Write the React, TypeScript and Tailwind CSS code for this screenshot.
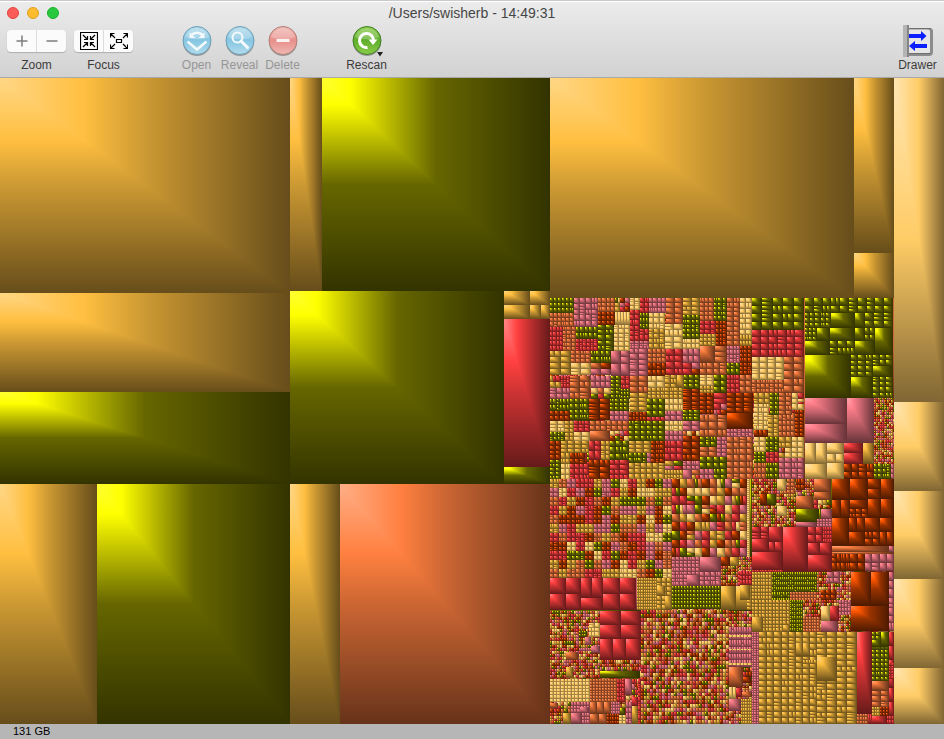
import React from "react";

type Tone = "g" | "o" | "r" | "c" | "p" | "y" | "b";
type Leaf = { x: number; y: number; w: number; h: number; tone: Tone };
type Layer = { x: number; y: number; unit: number; blocks: string };

/* Base colour of every file type. */
const TONES: Record<Tone, [number, number, number]> = {
  g: [204, 153, 51],
  o: [102, 102, 0],
  r: [204, 51, 51],
  c: [204, 102, 51],
  p: [204, 102, 112],
  y: [255, 204, 102],
  b: [153, 51, 0],
};
const TONE_KEYS = Object.keys(TONES) as Tone[];
const MIX: Tone[] = ["y", "g", "r", "c", "p", "b", "o", "r", "c", "b", "y", "o", "p", "g", "r", "b", "c"];

const rgb = (c: number[]) => `rgb(${c.map((v) => Math.round(v)).join(",")})`;

/* Light corner, full brightness, base colour, shadow. */
function stopsFor(tone: Tone) {
  const c = TONES[tone];
  const max = Math.max(...c);
  const value = max / 255;
  const sat = 1 - Math.min(...c) / max;
  const room = 1 - value;
  const knee = 0.5 - room / (room + sat);
  const top = c.map((v) => v / value);
  const lift = (room + sat) * 0.5 - room;
  const light = top.map((v) => 255 - (255 - v) * ((sat - lift) / sat));
  return [
    { at: 0, color: rgb(light) },
    { at: Math.max(knee, 0), color: rgb(top) },
    { at: 0.5, color: rgb(c) },
    { at: 1, color: rgb(c.map((v) => v / 2)) },
  ];
}

/*
 * Block lines: tone x0 y0 x1 y1 [cellWidth cellHeight].
 * Without a cell size the block is one file. "m" colours every cell on its
 * own, "M" colours folders of several cells.
 */
const LAYERS: Layer[] = [
  {
    x: 0,
    y: 0,
    unit: 1,
    blocks: `g 0 78 290 293;g 0 293 290 392;o 0 392 290 484;g 0 484 97 724;o 97 484 290 724
g 290 78 322 291;o 322 78 550 291;o 290 291 504 484
g 504 291 530 305;g 530 291 550 305;g 504 305 530 319;g 530 305 541 319;g 541 305 550 319
r 504 319 550 467;o 504 467 550 484;g 290 484 340 724;c 340 484 550 724
g 550 78 854 298;g 854 78 894 253;g 854 253 894 298
y 894 78 944 402;y 894 402 944 491;y 894 491 944 579;y 894 579 944 668;y 894 668 944 724
M 550 298 752 480 5 5;m 550 476 894 724 4 4;m 752 393 805 480 5 5`,
  },
  {
    x: 500,
    y: 280,
    unit: 3,
    blocks: `o 150 54 221 98 12 14;p 221 54 293 140 18 17;c 293 54 345 96 12 14;b 293 96 345 134 13 13
m 345 54 390 96 14 14;y 345 96 390 134 9 38;y 390 54 420 90 15 12;r 420 54 446 100 13 15
r 390 90 420 182 15 15;o 420 100 446 146 9 15;r 420 146 446 184 13 19;p 446 54 498 98 13 15
y 446 98 496 146 17 16;g 446 146 496 208 17 16;c 498 54 548 132 25 16;y 496 132 548 208 26 19
g 548 54 600 106 26 13;o 548 106 600 176 13 14;y 548 176 600 208 12 16;c 600 54 641 124 14 14
o 641 54 680 124 13 14;r 600 124 648 162 16 13;g 600 162 648 198 12 12;b 648 124 680 198 11 12
c 680 54 720 198 20 15;y 720 54 756 164 18 16;g 720 164 756 198 9 17
c 150 98 221 140 12 14;r 150 140 189 212 10 14;c 189 140 227 212 13 12;o 227 140 293 178 13 19
r 227 178 293 212 11 11;o 293 134 341 212 24 16;y 341 134 390 212 16 13;p 390 182 446 208 14 9
p 390 208 444 288 27 16;c 444 208 498 248 14 13;b 444 248 498 288 13 20;r 498 208 548 284 25 19
p 548 208 600 248 17 20;m 548 248 600 284 26 18;c 600 198 645 250;c 645 198 680 250 35 17
c 600 250 680 284 20 17;p 680 198 720 250 10 13;b 720 198 756 284 12 12;o 680 250 720 284 13 17
g 150 212 212 286 31 18;c 212 212 272 250 15 13;y 212 250 272 286 30 18;o 272 212 333 250 15 19
m 272 250 333 286 30 18;p 333 212 390 288 28 38;m 150 288 182 324 16 18;r 182 288 211 324 10 12
c 211 288 270 358 29 18;p 272 288 333 324 15 18;m 272 324 333 358 20 17;o 333 288 362 358 14 12
r 362 288 390 328 14 13;o 362 328 390 358 10 10;c 390 288 443 338 26 16;y 443 288 496 324 27 18
g 443 324 496 358 13 12;g 390 338 443 394 26 14;g 496 284 530 324 17 13;g 530 284 552 324;g 496 324 550 358 14 12
o 552 284 600 326 16 14;b 550 326 600 390 25 13;y 600 284 641 318 20 17;g 600 318 641 338 10 10
o 641 284 680 338 20 18;r 680 284 720 338 13 13;c 720 284 756 338 18 18;p 150 324 211 358 20 17
o 150 358 211 392 10 17;b 150 392 211 422 15 15;o 211 358 268 420 14 15;b 268 358 330 420 31 15
o 330 358 387 392 14 12;p 330 392 387 422 14 15;b 387 396 441 422 11 13;o 441 358 494 410 18 17
r 441 410 494 422 27 12;y 494 358 548 392 14 17;p 494 392 548 422 18 15;o 548 390 600 422 17 11
b 600 338 641 402 20 13;r 641 338 680 372 39 17;m 641 372 680 404 20 16;b 680 338 760 398 27 15
b 680 398 760 446;p 680 446 760 470 12 12;c 600 404 680 470 27 22
y 150 422 195 456 22 11;o 150 456 195 482 11 13;g 195 422 221 482 13 12;r 221 422 270 456 16 11
y 221 456 270 482 25 13;c 270 422 387 452 17 15;c 270 452 330 482;m 330 452 387 482 15 15
o 387 422 494 482 18 15;y 494 422 548 452 14 15;p 494 452 548 482 14 15;p 548 422 600 452 26 15
m 548 452 600 482 13 15;b 150 482 182 540 16 14;g 182 482 268 520 21 13;b 210 520 255 552 15 16
g 182 520 210 552 14 16;r 268 482 302 540 17 29;g 302 482 330 540 14 14;o 330 482 387 540 19 19
g 387 482 452 518 22 12;o 387 518 440 548 13 15;p 440 518 452 548 12 15;b 452 482 494 548 14 13
r 494 482 548 542 18 20;b 548 468 600 542 26 18;o 600 470 650 502 16 16;p 650 470 680 532 15 12
c 600 502 650 532 25 15;o 600 532 680 566 20 17;c 680 470 760 600 20 19
o 150 540 182 600 16 12;y 182 552 210 600 14 16;r 210 552 268 600 15 16;b 268 540 330 600 31 20
r 330 540 387 600 28 15;g 387 548 494 600 18 17;m 494 542 548 570 27 14;g 494 570 548 600 9 15
p 548 542 600 570 13 14;p 548 570 575 600;m 575 570 600 600 25 15;p 600 566 641 600 14 17;o 641 566 680 600 20 17`,
  },
  {
    x: 745,
    y: 280,
    unit: 3,
    blocks: `o 20 54 177 150 31 24;r 20 150 177 230 26 20;y 20 230 116 300 24 17;c 116 230 177 338 30 22;c 20 300 116 338 14 12
c 177 54 180 598;o 180 54 444 98 26 22;o 180 98 258 143 16 15;o 258 98 330 143;o 330 98 360 143;o 360 98 444 143 28 22
o 180 143 216 182 12 13;o 216 143 255 182;o 255 143 330 182;o 330 143 360 182;o 360 143 390 182 30 20;o 390 143 444 224
o 180 182 255 224;o 255 182 330 224 25 20;o 330 182 390 224
o 180 224 318 354;o 318 224 384 290 22 16;o 318 290 384 354;o 384 224 444 354 20 16;o 384 258 440 290
p 180 354 306 432;p 180 432 306 489;p 306 354 387 489;m 387 354 444 552 6 7
c 444 54 447 354;m 444 354 447 600 3 20
y 180 489 212 552;y 212 489 246 552;y 246 489 297 521;y 246 521 297 548 25 27;y 180 552 246 598;y 246 548 297 598
r 297 489 354 520;r 297 520 354 552;g 354 489 387 552;b 297 552 387 598 22 23;o 387 552 438 598 13 15;p 438 552 447 598 9 15
g 26 338 76 372 17 17;y 26 372 72 450 16 13;o 76 338 101 404 12 13;g 70 404 101 472 15 13;b 26 450 70 472 15 22
c 101 338 140 404 20 13;m 140 338 177 390 18 17;b 150 390 177 472 13 12;c 101 404 150 472 12 17
y 26 472 64 515 19 14;o 64 472 101 515 12 14;o 26 515 64 550 12 12;r 64 515 101 550 12 17;c 26 550 64 598 13 16
o 64 550 101 598 12 16;g 101 472 140 505 20 16;y 140 472 177 535 18 15;y 120 505 140 535 20 15;m 101 505 120 535 19 15;p 101 535 177 598 19 16`,
  },
  {
    x: 540,
    y: 475,
    unit: 3,
    blocks: `M 30 12 396 308 13 14;m 396 12 622 246 22 25;y 622 12 630 260 8 6;o 630 12 636 246
p 396 246 480 334 12 11;p 480 246 543 290;p 440 300 480 334 40 34;p 480 290 543 334 16 15;b 543 246 570 272;g 570 246 596 272
m 596 246 636 290 7 7;m 543 272 594 332 7 9;r 594 288 636 332 10 12
r 30 308 78 356;r 78 308 122 356;r 122 308 155 368;r 155 308 189 368;r 122 368 189 404;r 189 308 240 356;r 240 308 288 356
r 30 356 78 404;r 78 356 122 404;r 189 356 240 404;r 240 356 288 404;p 288 308 292 404
g 292 308 350 404 7 9;g 350 308 396 404 15 14;g 350 334 375 362;g 375 362 396 404;o 396 334 543 402 9 11
g 543 332 588 404;g 588 332 636 404;o 30 404 636 409`,
  },
  {
    x: 740,
    y: 470,
    unit: 3,
    blocks: `m 36 27 168 171 7 9;y 112 27 138 62;o 80 72 108 104;b 60 72 80 104;y 110 108 140 138;b 168 27 194 60 13 16;c 142 27 166 72 12 12
m 194 27 222 78 7 9;c 222 27 274 66;c 222 66 274 90;c 168 78 220 117;m 222 90 274 117 14 13;o 168 117 238 156
o 238 117 242 156;p 242 117 276 147;p 168 156 232 171;p 232 147 276 171 10 8;o 274 27 276 115
r 36 171 86 208 22 18;r 36 208 86 246;r 86 171 128 216;r 86 216 106 246;r 106 216 128 246;r 36 246 128 300;r 36 300 128 306 8 6
r 128 171 204 306;r 204 171 250 218 22 23;r 250 171 276 218 6 12;r 204 218 240 254;r 240 218 276 254;r 204 254 276 306
b 276 27 330 90;b 330 27 384 90;b 384 27 422 58;b 384 58 422 86;b 422 27 461 86;b 276 90 302 143;b 302 90 330 143
b 330 90 384 116;b 330 116 384 143 16 14;b 384 86 422 143;b 422 86 461 143;b 276 143 327 228;b 327 143 350 185
b 350 143 375 185;b 375 143 420 185;b 420 143 461 185;b 327 185 375 228;b 375 185 420 228 22 21;b 420 185 440 228;b 440 185 461 228
c 276 228 447 246;p 447 228 461 246;c 276 246 461 251;b 276 251 330 304 14 26;b 330 251 375 304 22 26;p 375 251 461 304 24 26
g 36 306 96 420 9 10;g 22 306 36 420 14 10;o 96 306 232 366 6 16;o 96 366 150 400 7 14;c 150 366 232 420 9 9
m 232 306 333 420 7 9;p 260 306 300 340 16 14;b 242 360 288 406 15 15;r 0 304 36 346 10 14;g 0 346 30 390
b 333 306 392 408;b 392 306 447 408;p 447 306 461 408 14 25`,
  },
  {
    x: 540,
    y: 600,
    unit: 3,
    blocks: `o 30 29 303 33;m 30 33 180 235 7 9;c 78 155 114 180;g 78 200 100 234;y 148 70 180 110 15 13;o 116 92 142 110 9 9;p 135 112 153 135;p 153 138 180 158
r 180 33 242 75;r 242 33 303 75;r 180 75 242 117;r 242 75 303 117;r 180 117 219 179;r 219 117 258 179;r 258 117 303 179
m 180 179 303 213 7 11;o 180 213 300 234;y 300 213 303 234
y 30 236 150 306 11 10;c 150 236 230 306 9 9;r 230 236 256 306 9 14;p 256 236 276 284;m 276 236 300 318 9 18;r 276 290 294 318
m 30 306 92 340 10 11;c 30 308 54 324;p 92 306 150 340 10 11;p 120 322 146 340;c 150 306 214 342 22 36;p 214 306 240 342 7 9;c 150 342 202 372 26 30
b 202 342 240 372 8 10;m 30 340 68 372 7 9;g 68 340 92 372;p 92 340 126 372;p 126 340 150 372 8 10;o 240 325 256 345;y 238 345 258 372 10 9
p 258 306 276 372 9 18;g 276 318 294 372;r 294 236 303 372 9 14;m 303 29 567 372 9 12
m 567 33 636 80 8 9;p 567 80 636 202 8 20;y 567 106 636 110 12 4;y 567 147 636 151 12 4;y 567 190 636 194 12 4
c 567 202 609 260;m 609 217 636 296 9 14;b 609 232 633 248;y 567 260 588 296 10 36;r 588 265 606 290;c 606 276 636 290
p 567 296 604 332;g 604 296 636 372 7 10;m 567 332 604 372 7 9`,
  },
  {
    x: 740,
    y: 600,
    unit: 3,
    blocks: `g 36 0 150 96 10 11;g 36 50 70 96;g 128 74 150 96;o 150 0 190 96 6 12;m 190 0 240 50 6 10;c 190 50 240 96 8 10
m 232 0 298 18 7 9;y 243 18 270 62;r 270 18 298 62;p 243 62 294 96;p 298 0 333 96 9 12;m 298 44 333 96 8 9
b 333 18 447 93;p 447 0 461 93 14 24;p 36 96 57 372 7 7
g 57 96 147 372 22 18;g 147 96 230 372 21 18;g 230 96 351 372 30 17;g 168 130 188 168;g 188 130 210 168;g 230 170 290 242;g 188 180 230 192 8 12
r 351 96 396 342;c 351 342 384 372 8 9;r 384 342 396 372 6 30
o 396 96 447 244 13 13;o 422 96 447 142;o 396 120 422 142;c 396 244 447 274;c 396 274 447 320 22 15;g 396 320 420 348 8 9
b 420 320 447 348 9 9;r 396 348 440 372;r 440 348 461 372 7 12;r 447 96 461 348 14 44;r 447 190 461 238 6 8`,
  },
];

function makeRandom(seed: number) {
  let s = seed;
  return () => {
    s = (s + 0x6d2b79f5) | 0;
    let t = Math.imul(s ^ (s >>> 15), 1 | s);
    t = (t + Math.imul(t ^ (t >>> 7), 61 | t)) ^ t;
    return ((t ^ (t >>> 14)) >>> 0) / 4294967296;
  };
}

function buildLeaves(): Leaf[] {
  const random = makeRandom(1449);
  const leaves: Leaf[] = [];
  const pick = () => MIX[Math.floor(random() * MIX.length)];

  const push = (x0: number, y0: number, x1: number, y1: number, tone: Tone) => {
    const x = Math.round(x0);
    const y = Math.round(y0);
    const w = Math.round(x1) - x;
    const h = Math.round(y1) - y;
    if (w > 0 && h > 0) leaves.push({ x, y, w, h, tone });
  };

  const grid = (x0: number, y0: number, x1: number, y1: number, cw: number, ch: number, tone: () => Tone) => {
    const rows = Math.max(1, Math.round((y1 - y0) / ch));
    const cols = Math.max(1, Math.round((x1 - x0) / cw));
    const dx = (x1 - x0) / cols;
    const dy = (y1 - y0) / rows;
    for (let r = 0; r < rows; r++) {
      for (let c = 0; c < cols; c++) {
        const ax = x0 + c * dx;
        const ay = y0 + r * dy;
        const roll = random();
        if (roll < 0.1 && dx >= 4) {
          push(ax, ay, ax + dx / 2, ay + dy, tone());
          push(ax + dx / 2, ay, ax + dx, ay + dy, tone());
        } else if (roll < 0.18 && dy >= 4) {
          push(ax, ay, ax + dx, ay + dy / 2, tone());
          push(ax, ay + dy / 2, ax + dx, ay + dy, tone());
        } else {
          push(ax, ay, ax + dx, ay + dy, tone());
        }
      }
    }
  };

  for (const layer of LAYERS) {
    for (const line of layer.blocks.split(/[;\n]/)) {
      const [kind, ...rest] = line.trim().split(" ");
      const n = rest.map(Number);
      const x0 = Math.round(layer.x + n[0] / layer.unit);
      const y0 = Math.round(layer.y + n[1] / layer.unit);
      const x1 = Math.round(layer.x + n[2] / layer.unit);
      const y1 = Math.round(layer.y + n[3] / layer.unit);
      const cw = n[4] / layer.unit;
      const ch = n[5] / layer.unit;
      if (kind === "M") {
        const cols = Math.round((x1 - x0) / 9);
        const rows = Math.round((y1 - y0) / 9);
        const dx = (x1 - x0) / cols;
        const dy = (y1 - y0) / rows;
        for (let r = 0; r < rows; r++) {
          for (let c = 0; c < cols; c++) {
            const tone = pick();
            grid(x0 + c * dx, y0 + r * dy, x0 + (c + 1) * dx, y0 + (r + 1) * dy, cw, ch, () => tone);
          }
        }
      } else if (kind === "m") {
        grid(x0, y0, x1, y1, cw, ch, pick);
      } else if (n.length > 4) {
        grid(x0, y0, x1, y1, cw, ch, () => kind as Tone);
      } else {
        push(x0, y0, x1, y1, kind as Tone);
      }
    }
  }
  return leaves;
}

const LEAVES = buildLeaves();

function Treemap() {
  return (
    <svg
      className="block min-h-0 w-full flex-1"
      viewBox="0 78 944 646"
      preserveAspectRatio="none"
      shapeRendering="crispEdges"
      role="img"
      aria-label="Disk usage"
    >
      <defs>
        {TONE_KEYS.map((tone) => (
          <React.Fragment key={tone}>
            <linearGradient id={`h-${tone}`} x1="0" y1="0" x2="1" y2="0">
              {stopsFor(tone).map((s, i) => (
                <stop key={i} offset={s.at} stopColor={s.color} />
              ))}
            </linearGradient>
            <linearGradient id={`v-${tone}`} x1="0" y1="0" x2="0" y2="1">
              {stopsFor(tone).map((s, i) => (
                <stop key={i} offset={s.at} stopColor={s.color} />
              ))}
            </linearGradient>
          </React.Fragment>
        ))}
      </defs>
      {LEAVES.map((l, i) => (
        <g key={i}>
          <rect x={l.x} y={l.y} width={l.w} height={l.h} fill={`url(#h-${l.tone})`} />
          <path d={`M${l.x} ${l.y}v${l.h}h${l.w}z`} fill={`url(#v-${l.tone})`} />
        </g>
      ))}
    </svg>
  );
}

function Orb({ from, to, edge, children }: { from: string; to: string; edge: string; children: React.ReactNode }) {
  const id = `orb-${edge.slice(1)}`;
  return (
    <svg width="32" height="32" viewBox="0 0 32 32" fill="none" aria-hidden="true">
      <defs>
        <linearGradient id={id} x1="0" y1="0" x2="0" y2="1">
          <stop offset="0" stopColor={from} />
          <stop offset="0.5" stopColor={to} />
          <stop offset="1" stopColor={from} />
        </linearGradient>
      </defs>
      <ellipse cx="16" cy="17.5" rx="14" ry="13.5" fill="#000" opacity="0.3" />
      <circle cx="16" cy="15.5" r="14" fill={`url(#${id})`} stroke={edge} />
      <path d="M4 12a12.500 12.500 0 0 1 24 0c-6 3-18 3-24 0z" fill="#fff" opacity="0.22" />
      {children}
    </svg>
  );
}

function Tool({ label, muted, children }: { label: string; muted?: boolean; children: React.ReactNode }) {
  return (
    <button type="button" disabled={muted} className="flex w-[43px] flex-col items-center">
      <span className="flex h-8 items-center">{children}</span>
      <span className={`text-xs leading-4 ${muted ? "text-[#969696]" : "text-[#3c3c3c]"}`}>{label}</span>
    </button>
  );
}

function Segments({ label, items }: { label: string; items: { name: string; icon: React.ReactNode }[] }) {
  return (
    <div role="group" aria-label={label} className="flex w-[59px] flex-col items-center">
      <div className="flex h-8 w-full items-center">
        <div className="flex h-[22px] w-full divide-x divide-[#dcdcdc] rounded bg-[#fbfbfb] shadow-[0_1px_1px_rgba(0,0,0,0.2)]">
          {items.map((item) => (
            <button key={item.name} type="button" aria-label={item.name} className="flex flex-1 items-center justify-center">
              {item.icon}
            </button>
          ))}
        </div>
      </div>
      <span className="text-xs leading-4 text-[#3c3c3c]">{label}</span>
    </div>
  );
}

const plusIcon = (
  <svg width="12" height="12" viewBox="0 0 12 12" stroke="#7d7d7d" strokeWidth="1.500">
    <path d="M6 .5v11M.5 6h11" />
  </svg>
);
const minusIcon = (
  <svg width="12" height="12" viewBox="0 0 12 12" stroke="#7d7d7d" strokeWidth="1.500">
    <path d="M.5 6h11" />
  </svg>
);
const focusInIcon = (
  <svg width="18" height="18" viewBox="0 0 18 18" fill="none" stroke="#000" strokeWidth="1.200">
    <path d="M.5 .5h17v17H.5z" />
    <path d="M3 3l4 4M7.500 4v3.500H4M15 3l-4 4M10.500 4v3.500H14M3 15l4-4M4 10.500h3.500V14M15 15l-4-4M14 10.500h-3.500V14" />
  </svg>
);
const focusOutIcon = (
  <svg width="18" height="18" viewBox="0 0 18 18" fill="none" stroke="#000" strokeWidth="1.200">
    <path d="M6.500 7.500h5v3h-5z" />
    <path d="M1 2l4 4M.5 5.500v-4h4M17 2l-4 4M17.500 5.500v-4h-4M1 16l4-4M.5 12.500v4h4M17 16l-4-4M17.500 12.500v4h-4" />
  </svg>
);

export default function App() {
  return (
    <div className="flex h-screen flex-col overflow-hidden bg-[#b6b6b6] font-['Liberation_Sans',Arial,sans-serif]">
      <header className="shrink-0 border-b border-[#a9a9a9] bg-linear-to-b from-[#ececec] to-[#d2d2d2]">
        <div className="h-px bg-[#c9c9c9]" />
        <div className="grid h-6 grid-cols-[1fr_auto_1fr] items-center border-t border-white pb-px">
          <div className="flex gap-2 pl-[7px]">
            <button type="button" aria-label="Close" className="size-3 rounded-full border border-[#e2463f] bg-[#fc5b57]" />
            <button type="button" aria-label="Minimize" className="size-3 rounded-full border border-[#dfa023] bg-[#fdbc2e]" />
            <button type="button" aria-label="Full screen" className="size-3 rounded-full border border-[#1daf2b] bg-[#28c93f]" />
          </div>
          <h1 className="text-sm leading-4 text-[#464646]">/Users/swisherb - 14:49:31</h1>
        </div>
        <div className="flex h-[52px] pr-[5px] pl-[7px]">
          <div className="flex gap-2">
            <Segments
              label="Zoom"
              items={[
                { name: "Zoom in", icon: plusIcon },
                { name: "Zoom out", icon: minusIcon },
              ]}
            />
            <Segments
              label="Focus"
              items={[
                { name: "Focus in", icon: focusInIcon },
                { name: "Focus out", icon: focusOutIcon },
              ]}
            />
          </div>
          <div className="ml-[42px] flex">
            <Tool label="Open" muted>
              <Orb from="#b3dcec" to="#86c6e2" edge="#6d9db5">
                <path d="M6.500 16.500l9.500 8 9.500-8" stroke="#f4f9fb" strokeWidth="2.500" />
                <path d="M10.500 10c3-3 8-3 11 0" stroke="#f4f9fb" strokeWidth="2.500" />
                <path d="M8.500 7.500v5.500h6zM23.500 7.500v5.500h-6z" fill="#f4f9fb" />
              </Orb>
            </Tool>
            <Tool label="Reveal" muted>
              <Orb from="#b3dcec" to="#86c6e2" edge="#6d9db6">
                <circle cx="13.500" cy="12.500" r="5" stroke="#f4f9fb" strokeWidth="2" />
                <path d="M17 16l6.500 6.500" stroke="#f4f9fb" strokeWidth="3" strokeLinecap="round" />
              </Orb>
            </Tool>
            <Tool label="Delete" muted>
              <Orb from="#f0b9b2" to="#e88f8b" edge="#b08078">
                <path d="M9.500 15.500h13" stroke="#fbf3f2" strokeWidth="3" />
              </Orb>
            </Tool>
          </div>
          <div className="ml-[41px] flex">
            <Tool label="Rescan">
              <Orb from="#8ccc4a" to="#5fae2c" edge="#3f7f2a">
                <path d="M16.500 22.500a7 7 0 1 1 6-7" stroke="#fff" strokeWidth="3" />
                <path d="M17.500 14.500h9l-4.500 5.500z" fill="#fff" />
                <path d="M26 27h6l-3 4.500z" fill="#222" />
              </Orb>
            </Tool>
          </div>
          <div className="ml-auto flex">
            <Tool label="Drawer">
              <svg width="32" height="32" viewBox="0 0 32 32" aria-hidden="true">
                <path d="M6 3h21q4 0 4 3v21q0 4-4 4H6z" fill="#8c8c8c" />
                <path d="M6 4.500h20q2 0 2 2v20q0 2-2 2H6z" fill="#e6e6e6" />
                <path d="M6 3.500h23M6 28.500h22" stroke="#707070" />
                <path d="M1 0h4v32H1z" fill="#b4b4b4" />
                <path d="M5 0h2v32H5z" fill="#858585" />
                <path d="M7 9h12V6l5.500 5-5.500 5v-3H7zM25 19H13v-3l-6 5 6 5v-3h12z" fill="#0a1eff" />
              </svg>
            </Tool>
          </div>
        </div>
      </header>
      <Treemap />
      <footer className="h-[15px] shrink-0 bg-[#b6b6b6] pl-[13px] text-[11px] leading-[15px] text-black">131 GB</footer>
    </div>
  );
}
